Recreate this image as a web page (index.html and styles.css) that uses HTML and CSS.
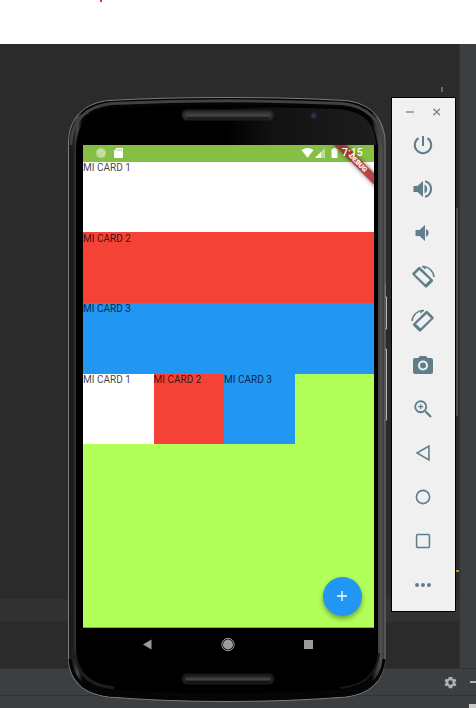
FILE: index.html
```html
<!DOCTYPE html>
<html lang="es">
<head>
<meta charset="utf-8">
<title>Emulator</title>
<link rel="stylesheet" href="styles.css">
</head>
<body>
<main class="desktop">
  <header class="page-top"><i class="red-dot"></i></header>
  <section class="ide">
    <div class="editor"><div class="current-line"></div><i class="caret-mark"></i><i class="scroll-thumb"></i><i class="warning-mark"></i></div>
    <aside class="gutter"></aside>
  </section>
  <footer class="ide-bottom">
    <div class="tool-header">
      <svg class="gear" viewBox="0 0 24 24"><path fill-rule="evenodd" d="M19.4 13a7 7 0 0 0 0-2l2.1-1.6-2-3.5-2.5 1a7.500 7.500 0 0 0-1.700-1L15 3H9l-.4 2.900a7.500 7.500 0 0 0-1.700 1l-2.500-1-2 3.500L4.600 11a7 7 0 0 0 0 2l-2.100 1.600 2 3.500 2.500-1a7.500 7.500 0 0 0 1.700 1L9 21h6l.4-2.900a7.500 7.500 0 0 0 1.700-1l2.500 1 2-3.500zM12 15.500a3.500 3.500 0 1 1 0-7 3.500 3.500 0 0 1 0 7z"/></svg>
      <i class="dash"></i>
    </div>
    <div class="tool-body"><i class="corner"></i></div>
  </footer>

  <section class="phone">
    <svg class="phone-shell" viewBox="66 94 324 612" fill="none">
      <defs>
        <linearGradient id="rim" x1="68" x2="386" y1="0" y2="0" gradientUnits="userSpaceOnUse">
          <stop offset="0" stop-color="#181818"/><stop offset=".018" stop-color="#202020"/><stop offset=".03" stop-color="#484848"/><stop offset=".045" stop-color="#050505"/>
          <stop offset=".955" stop-color="#050505"/><stop offset=".968" stop-color="#333"/><stop offset=".985" stop-color="#505050"/><stop offset="1" stop-color="#292929"/>
        </linearGradient>
        <linearGradient id="face" x1="76" x2="378" y1="0" y2="0" gradientUnits="userSpaceOnUse">
          <stop offset="0" stop-color="#000"/><stop offset=".5" stop-color="#000"/><stop offset=".65" stop-color="#121212"/><stop offset="1" stop-color="#1d1d1d"/>
        </linearGradient>
      </defs>
      <path d="M385 284V297H386.500V329H385M385 349H386.500V420H385" stroke="#b5b5b5"/>
      <path d="M68.500 142C69 118 84 103 109 100.500Q160 97.500 227 97.500T345 100.500C370 103 384.500 118 385 142V658C384 682 369 694 346 697Q290 701.500 227 701.500T109 697C84 694 69 682 68.500 658Z" fill="url(#rim)" stroke="#7c7c7c"/>
      <path d="M71 145C71 120 87 106 112 103.500Q227 98 342 103.500C367 106 382 120 382.500 145" stroke="#414141" stroke-width="3"/>
      <path d="M70 659C72 680 86 692 110 695Q227 702 344 695C368 692 382 680 384 659" stroke="#050505" stroke-width="3"/>
      <path d="M76 150C76 123 89 110 115 107.500Q227 103 339 107.500C364 110 377 123 378 150V655C377 674 365 687 340 690Q227 697 114 690C89 687 77 674 76 655Z" fill="#000"/>
      <path d="M78 145C79 123 91 111 115 109Q227 105 339 109C363 111 375 123 376 145Z" fill="url(#face)"/>
      <path d="M75 653C77 675 91 686 114 688" stroke="#1d1d1d" stroke-width="3"/>
      <path d="M379 653C377 675 363 686 340 688" stroke="#191919" stroke-width="2"/>
      <rect x="182.500" y="110.500" width="91" height="9" rx="4.500" fill="#303030" stroke="#202020" stroke-width="2"/>
      <path d="M187 115H269" stroke="#414141" stroke-width="3" stroke-linecap="round"/><path d="M187 118H269" stroke="#111"/>
      <circle cx="314" cy="115.500" r="3.500" fill="#202338"/><circle cx="313.500" cy="115.500" r="1.500" fill="#343e61"/>
      <rect x="182.500" y="674.500" width="91" height="9" rx="4.500" fill="#222" stroke="#191919" stroke-width="2"/>
      <path d="M187 679H269" stroke="#414141" stroke-width="3" stroke-linecap="round"/><path d="M187 682H269" stroke="#0b0b0b"/>
    </svg>
    <div class="screen">
      <div class="status-bar">
        <svg class="status-left" viewBox="0 0 30 16"><circle cx="5" cy="8" r="4.900" fill="#bddb98"/><path d="M1.500 6L8 11M3 4L9 8" stroke="#d3e8bb"/><path d="M20.500 3H26Q27 3 27 4V12Q27 13 26 13H19Q18 13 18 12V6Z" fill="#fff"/><path d="M21 4V6M23 4V6M25 4V6" stroke="#85c044" stroke-width=".8"/></svg>
        <svg class="status-right" viewBox="0 0 40 16" fill="#fff"><path d="M.5 5Q6.500 1 12.500 5L6.500 12.700Z"/><path d="M24 3V13H14Z" opacity=".45"/><path d="M20 7V13H14Z"/><path d="M31 4H32V3H35V4H36Q36.500 4 36.500 5V12Q36.500 13 35.500 13H31.500Q30.500 13 30.500 12V5Q30.500 4 31 4Z"/></svg>
        <time class="clock">7:15</time>
      </div>
      <div class="app">
        <div class="card white">MI CARD 1</div>
        <div class="card red">MI CARD 2</div>
        <div class="card blue">MI CARD 3</div>
        <div class="card-row">
          <div class="card small white">MI CARD 1</div>
          <div class="card small red">MI CARD 2</div>
          <div class="card small blue">MI CARD 3</div>
        </div>
        <button class="fab" aria-label="+"><svg viewBox="0 0 12 12" stroke="#fff" stroke-width="1.300"><path d="M1 6H11M6 1V11"/></svg></button>
      </div>
      <div class="debug"><span>DEBUG</span></div>
      <nav class="nav-bar">
        <svg viewBox="0 0 291 34" fill="#9b9b9b"><path d="M60 16.500L68.500 11.500V21.500Z"/><circle cx="145" cy="16.500" r="5"/><circle cx="145" cy="16.500" r="6.200" fill="none" stroke="#9b9b9b"/><path d="M221 12H230V21H221Z"/></svg>
      </nav>
    </div>
  </section>

  <aside class="toolbar">
    <div class="window-buttons"><svg viewBox="0 0 63 25" fill="none" stroke="#6d8690" stroke-width="1.300"><path d="M14 14H22" stroke="#9bacb3" stroke-width="2"/><path d="M41.500 10.800L48 17.300M48 10.800L41.500 17.300"/></svg></div>
    <div class="tool"><svg viewBox="0 0 24 24" class="line big"><path d="M12 3V13M7.500 5.200A8.200 8.200 0 1 0 16.500 5.200"/></svg></div>
    <div class="tool"><svg class="big" viewBox="0 0 24 24"><path d="M2.500 9v6h4l5.500 5V4L6.500 9zM13.500 7.500v9a5 5 0 0 0 0-9zM14 3.200v2.100a7 7 0 0 1 0 13.400v2.100a9 9 0 0 0 0-17.600z"/></svg></div>
    <div class="tool"><svg class="big" viewBox="0 0 24 24"><path d="M4.500 9v6h4l5.500 5V4L8.500 9zM15 8v8a4.300 4.300 0 0 0 0-8z"/></svg></div>
    <div class="tool"><svg class="big" viewBox="0 0 24 24"><g id="rotation"><path fill-rule="evenodd" d="M7.300 2.200Q8.300 1.500 9.300 2.300L21.800 14.800Q22.500 15.700 21.800 16.500L16 22.300Q15 23 14.100 22.300L1.600 9.800Q.9 8.900 1.600 8ZM8.300 5L4 9.300L14.500 19.200L19 15Z"/><path d="M11 1.700C17 1 22.500 5.800 23 12" fill="none" stroke="#607d8b" stroke-width="1.500"/><path d="M11 1L14 4.400L15.300 3Z"/></g></svg></div>
    <div class="tool"><svg class="big mirror" viewBox="0 0 24 24"><use href="#rotation"/></svg></div>
    <div class="tool"><svg class="big" viewBox="0 0 24 24"><path fill-rule="evenodd" d="M9 3L7.200 5H4a2 2 0 0 0-2 2v12a2 2 0 0 0 2 2h16a2 2 0 0 0 2-2V7a2 2 0 0 0-2-2h-3.200L15 3zM12 17.500a5 5 0 1 1 0-10 5 5 0 0 1 0 10z"/><circle cx="12" cy="12.500" r="3"/></svg></div>
    <div class="tool"><svg viewBox="0 0 24 24" class="line"><circle cx="9.500" cy="9.500" r="6"/><path d="M14.500 14.500L20.700 20.700" stroke-width="2.500"/><path d="M9.500 6.700V12.300M6.700 9.500H12.300" stroke-width="1.400"/></svg></div>
    <div class="tool"><svg viewBox="0 0 24 24" class="line thin"><path d="M5.500 12L18.500 4.500V19.500Z"/></svg></div>
    <div class="tool"><svg viewBox="0 0 24 24" class="line thin"><circle cx="12" cy="12" r="7.200"/></svg></div>
    <div class="tool"><svg viewBox="0 0 24 24" class="line thin"><rect x="5" y="5" width="14" height="14" rx="1"/></svg></div>
    <div class="tool"><svg viewBox="0 0 24 24"><circle cx="5.500" cy="12" r="2.200"/><circle cx="12" cy="12" r="2.200"/><circle cx="18.500" cy="12" r="2.200"/></svg></div>
  </aside>
</main>
</body>
</html>
```
FILE: styles.css
```css
* { box-sizing: border-box; }
body { margin: 0; font-family: Roboto, sans-serif; }
svg { display: block; }
.desktop { position: relative; width: 476px; height: 708px; overflow: hidden; display: flex; flex-direction: column; background: #2b2b2b; }
.page-top { height: 44px; background: #fff; }
.red-dot { display: block; width: 2px; height: 2px; margin-left: 100px; background: #ff2020; }
.ide { height: 624px; display: flex; }
.editor { position: relative; flex: 1; padding-top: 555px; }
.current-line { height: 23px; background: #323232; }
.caret-mark { position: absolute; left: 441px; top: 43px; width: 2px; height: 5px; background: #466d94; }
.scroll-thumb { position: absolute; right: 1px; top: 164px; width: 2px; height: 208px; background: #4d4b4b; }
.warning-mark { position: absolute; right: 0; top: 526px; width: 3px; height: 2px; background: #be9117; }
.gutter { width: 17px; background: #3c3f41; border-left: 1px solid #313335; }
.ide-bottom { height: 40px; background: #3c3f41; }
.tool-header { height: 28px; display: flex; align-items: center; gap: 13px; padding-left: 443px; border-top: 1px solid #303233; border-bottom: 1px solid #303233; }
.gear { width: 15px; height: 15px; margin-right: -1px; fill: #afb1b3; flex: none; }
.dash { width: 6px; height: 2px; background: #afb1b3; }
.tool-body { display: flex; justify-content: flex-end; padding-top: 8px; }
.corner { width: 7px; height: 4px; background: #c9c9c9; }

.phone { position: absolute; left: 66px; top: 94px; width: 324px; height: 612px; padding: 51px 0 0 17px; }
.phone-shell { position: absolute; left: 0; top: 0; width: 324px; height: 612px; }
.screen { position: relative; width: 291px; height: 517px; overflow: hidden; background: #000; }
.status-bar { height: 16.500px; display: flex; align-items: center; padding: 0 12px 0 13px; background: #85c044; color: #fff; }
.status-left { width: 30px; height: 16px; }
.status-right { width: 40px; height: 16px; margin-left: auto; }
.clock { position: relative; z-index: 2; width: 20px; margin-left: 1px; font: 500 10.500px/16px Roboto, sans-serif; white-space: nowrap; }
.app { position: relative; height: 466.500px; background: #b2ff59; border-bottom: 1px solid #78ad38; }
.card { height: 70.700px; padding-top: .5px; font-size: 10px; line-height: 12px; color: rgba(0,0,0,.76); white-space: nowrap; }
.white { background: #fff; }
.red { background: #f44336; }
.blue { background: #2196f3; }
.card-row { display: flex; }
.small { width: 70.500px; }
.fab { position: absolute; right: 12px; bottom: 11px; width: 39.500px; height: 39.500px; padding: 0; border: 0; border-radius: 50%; display: grid; place-items: center; background: #2196f3; box-shadow: 0 3px 5px rgba(0,0,0,.35); }
.fab svg { width: 12px; height: 12px; }
.debug { position: absolute; right: -16px; top: 13.500px; width: 64px; height: 8px; transform: rotate(45deg); background: rgba(165,35,35,.84); box-shadow: 0 0 5px rgba(0,0,0,.5); color: #fff; font: 900 7px/8px Roboto, sans-serif; text-align: center; }
.nav-bar { height: 34px; background: #000; }
.nav-bar svg { width: 291px; height: 34px; }

.toolbar { position: absolute; left: 391px; top: 97px; width: 65px; height: 515px; border: 1px solid #000; background: #f0f0f0; display: flex; flex-direction: column; }
.window-buttons { height: 25px; }
.window-buttons svg { width: 63px; height: 25px; }
.tool { height: 44px; padding-right: 1px; display: grid; place-items: center; }
.tool svg { width: 22px; height: 22px; fill: #607d8b; }
.tool .line { fill: none; stroke: #607d8b; stroke-width: 2; }
.tool .thin { stroke-width: 1.700; }
.tool .big { width: 24px; height: 24px; }
.tool .mirror { transform: scaleX(-1); }
```
